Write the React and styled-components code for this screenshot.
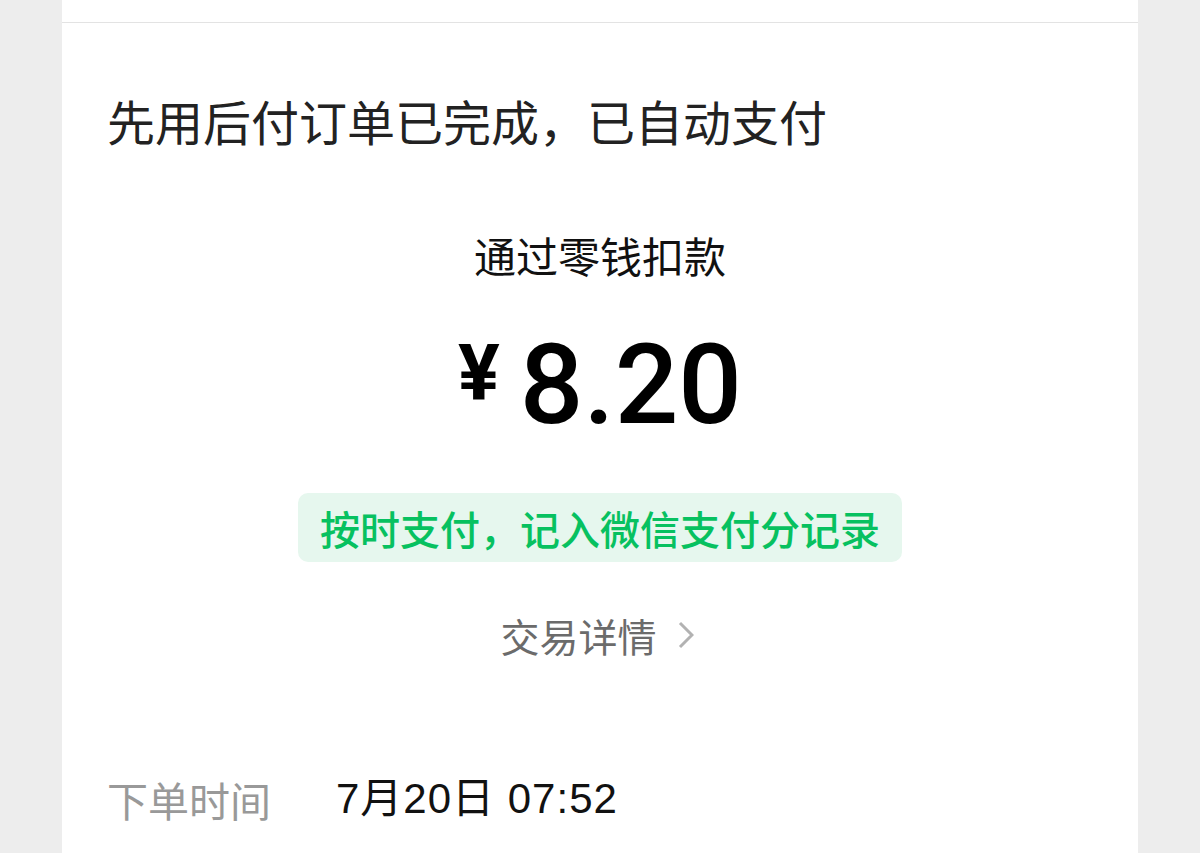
import styled, { createGlobalStyle } from 'styled-components';

const GlobalStyle = createGlobalStyle`
    html, body {
        margin: 0;
        padding: 0;
        background: #ededed;
    }
    body {
        font-family: "Noto Sans CJK SC", "Noto Sans", sans-serif;
        color: #191919;
    }
`;

function Chevron() {
    return (
        <svg width="16" height="28" viewBox="0 0 16 28" fill="none">
            <polyline points="2,2 14,14 2,26" stroke="#b2b2b2" strokeWidth="3" strokeLinejoin="miter" />
        </svg>
    );
}

export default function App() {
    return (
        <>
            <GlobalStyle />
            <Cartao>
                <BarraTopo />
                <Titulo>先用后付订单已完成，已自动支付</Titulo>
                <Centro>
                    <Subtitulo>通过零钱扣款</Subtitulo>
                    <Valor>
                        <Moeda>¥</Moeda>
                        <Numero>8.20</Numero>
                    </Valor>
                    <Selo>按时支付，记入微信支付分记录</Selo>
                    <Detalhes>
                        交易详情
                        <Chevron />
                    </Detalhes>
                </Centro>
                <Linha>
                    <Rotulo>下单时间</Rotulo>
                    <Dado>7月20日 07:52</Dado>
                </Linha>
            </Cartao>
        </>
    );
}

const Cartao = styled.div`
    margin: 0 62px;
    background: #ffffff;
    min-height: 100vh;
    display: flex;
    flex-direction: column;
`;
const BarraTopo = styled.div`
    height: 22px;
    border-bottom: 1px solid #e3e3e3;
`;
const Titulo = styled.div`
    padding: 67px 0 0 45px;
    font-size: 48px;
    line-height: 60px;
    color: #222222;
`;
const Centro = styled.div`
    display: flex;
    flex-direction: column;
    align-items: center;
`;
const Subtitulo = styled.div`
    margin-top: 77px;
    font-size: 42px;
    line-height: 56px;
    color: #111111;
`;
const Valor = styled.div`
    margin-top: 42px;
    display: flex;
    align-items: flex-start;
    height: 120px;
    color: #000000;
    font-family: Roboto, "Liberation Sans", sans-serif;
`;
const Moeda = styled.span`
    font-size: 78px;
    line-height: 78px;
    font-weight: 700;
    margin: 10px 20px 0 0;
`;
const Numero = styled.span`
    font-size: 112px;
    line-height: 120px;
    font-weight: 500;
`;
const Selo = styled.div`
    margin-top: 48px;
    height: 69px;
    display: flex;
    align-items: center;
    padding: 0 22px;
    border-radius: 10px;
    background: #e6f7ee;
    color: #07c160;
    font-size: 40px;
    font-weight: 500;
`;
const Detalhes = styled.div`
    margin-top: 48px;
    display: flex;
    align-items: center;
    gap: 21px;
    font-size: 39px;
    line-height: 50px;
    color: #6b6b6b;
    padding-right: 6px;
`;
const Linha = styled.div`
    margin-top: 112px;
    padding-left: 45px;
    display: flex;
    align-items: center;
    line-height: 54px;
`;
const Rotulo = styled.div`
    width: 229px;
    font-size: 41px;
    color: #999999;
`;
const Dado = styled.div`
    font-family: "Liberation Sans", "Noto Sans CJK SC", sans-serif;
    font-size: 42px;
    letter-spacing: 1px;
    color: #111111;
`;
